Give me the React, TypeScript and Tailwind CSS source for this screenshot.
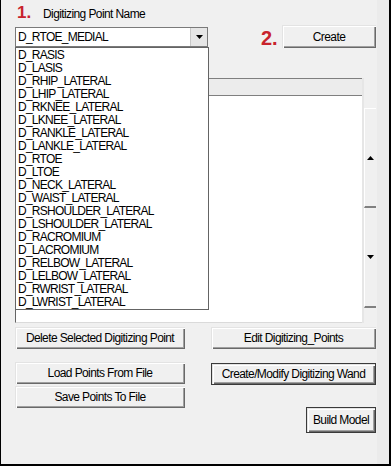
import React from "react";

const items = [
  "D_RASIS",
  "D_LASIS",
  "D_RHIP_LATERAL",
  "D_LHIP_LATERAL",
  "D_RKNEE_LATERAL",
  "D_LKNEE_LATERAL",
  "D_RANKLE_LATERAL",
  "D_LANKLE_LATERAL",
  "D_RTOE",
  "D_LTOE",
  "D_NECK_LATERAL",
  "D_WAIST_LATERAL",
  "D_RSHOULDER_LATERAL",
  "D_LSHOULDER_LATERAL",
  "D_RACROMIUM",
  "D_LACROMIUM",
  "D_RELBOW_LATERAL",
  "D_LELBOW_LATERAL",
  "D_RWRIST_LATERAL",
  "D_LWRIST_LATERAL",
];

const bevel =
  "shadow-[inset_1px_1px_#e3e3e3,inset_2px_2px_#ffffff,inset_-1px_-1px_#696969,inset_-2px_-2px_#a0a0a0]";

function Btn({
  children,
  className,
  def,
}: {
  children: React.ReactNode;
  className?: string;
  def?: boolean;
}) {
  return (
    <div
      className={
        "flex items-center justify-center bg-[#f0f0f0] text-[12px] tracking-[-0.6px] text-black " +
        bevel +
        (def ? " border border-[#3a3a3a]" : "") +
        " " +
        (className ?? "")
      }
    >
      {children}
    </div>
  );
}

function Tri({ up }: { up?: boolean }) {
  return (
    <svg width="7" height="4" viewBox="0 0 7 4">
      {up ? <path d="M0 4 L3.5 0 L7 4 Z" fill="#000" /> : <path d="M0 0 L7 0 L3.5 4 Z" fill="#000" />}
    </svg>
  );
}

export default function App() {
  return (
    <div className="w-[391px] h-[466px] flex bg-[#f0f0f0] border-l border-b-2 border-r-2 border-black font-['Liberation_Sans',Arial,sans-serif] text-black overflow-hidden">
      <div className="relative w-[376px] h-full pl-[14px] pr-[1px] flex flex-col">
        {/* row 1 */}
        <div className="h-[25px] flex items-start">
          <div className="w-[28px] pl-[2px] mt-[4px] text-[17px] leading-[17px] font-bold text-[#c8232c]">1.</div>
          <div className="mt-[8px] text-[12px] leading-[13px] tracking-[-0.6px]">Digitizing Point Name</div>
        </div>
        {/* row 2 */}
        <div className="h-[23px] flex items-start">
          <div className="mt-[2px] w-[193px] h-[20px] border border-[#7a7a7a] bg-white flex items-center">
            <div className="flex-1 pl-[2px] text-[12px] tracking-[-0.75px] leading-[13px]">D_RTOE_MEDIAL</div>
            <div className="w-[17px] h-full bg-[#e6e6e6] border-l border-[#c8c8c8] flex items-center justify-center">
              <Tri />
            </div>
          </div>
          <div className="ml-[53px] mt-[3px] text-[20px] leading-[20px] font-bold text-[#c8232c]">2.</div>
          <Btn className="ml-auto w-[94px] h-[23px]">Create</Btn>
        </div>
        {/* list view */}
        <div className="mt-[30px] flex">
          <div className="w-[350px] h-[245px] flex flex-col border-r-2 border-[#e6e6e6]">
            <div className="h-[18px] border-t border-b border-[#7f7f7f] bg-[#ececec]" />
            <div className="flex-1 bg-white border-l border-[#646464] border-b border-b-[#dadada]" />
          </div>
          <div className="w-[12px] pt-[30px] flex flex-col">
            <div className="h-[100px] bg-[#f0f0f0] border-t border-l border-white border-b-2 border-b-[#808080] flex items-center justify-center">
              <Tri up />
            </div>
            <div className="h-[100px] bg-[#f0f0f0] border-l border-white border-b-2 border-b-[#808080] flex items-center justify-center">
              <Tri />
            </div>
          </div>
        </div>
        {/* buttons */}
        <div className="mt-[4px] flex">
          <div className="w-[170px] flex flex-col">
            <Btn className="h-[22px]">Delete Selected Digitizing Point</Btn>
            <Btn className="mt-[13px] h-[22px]">Load Points From File</Btn>
            <Btn className="mt-[2px] h-[22px]">Save Points To File</Btn>
          </div>
          <div className="ml-[26px] w-[165px] flex flex-col">
            <Btn className="h-[22px]">Edit Digitizing_Points</Btn>
            <Btn def className="mt-[14px] h-[22px]">Create/Modify Digitizing Wand</Btn>
            <Btn def className="mt-[22px] h-[26px] w-[70px] self-end">Build Model</Btn>
          </div>
        </div>
        {/* dropdown popup */}
        <div className="absolute left-[14px] top-[47px] w-[194px] h-[263px] border border-[#646464] bg-white pt-[1px]">
          {items.map((t) => (
            <div key={t} className="h-[13px] leading-[13px] pl-[2px] text-[12px] tracking-[-0.75px] whitespace-nowrap">
              {t}
            </div>
          ))}
        </div>
      </div>
      <div className="flex-1 bg-[#ebebeb]" />
    </div>
  );
}
